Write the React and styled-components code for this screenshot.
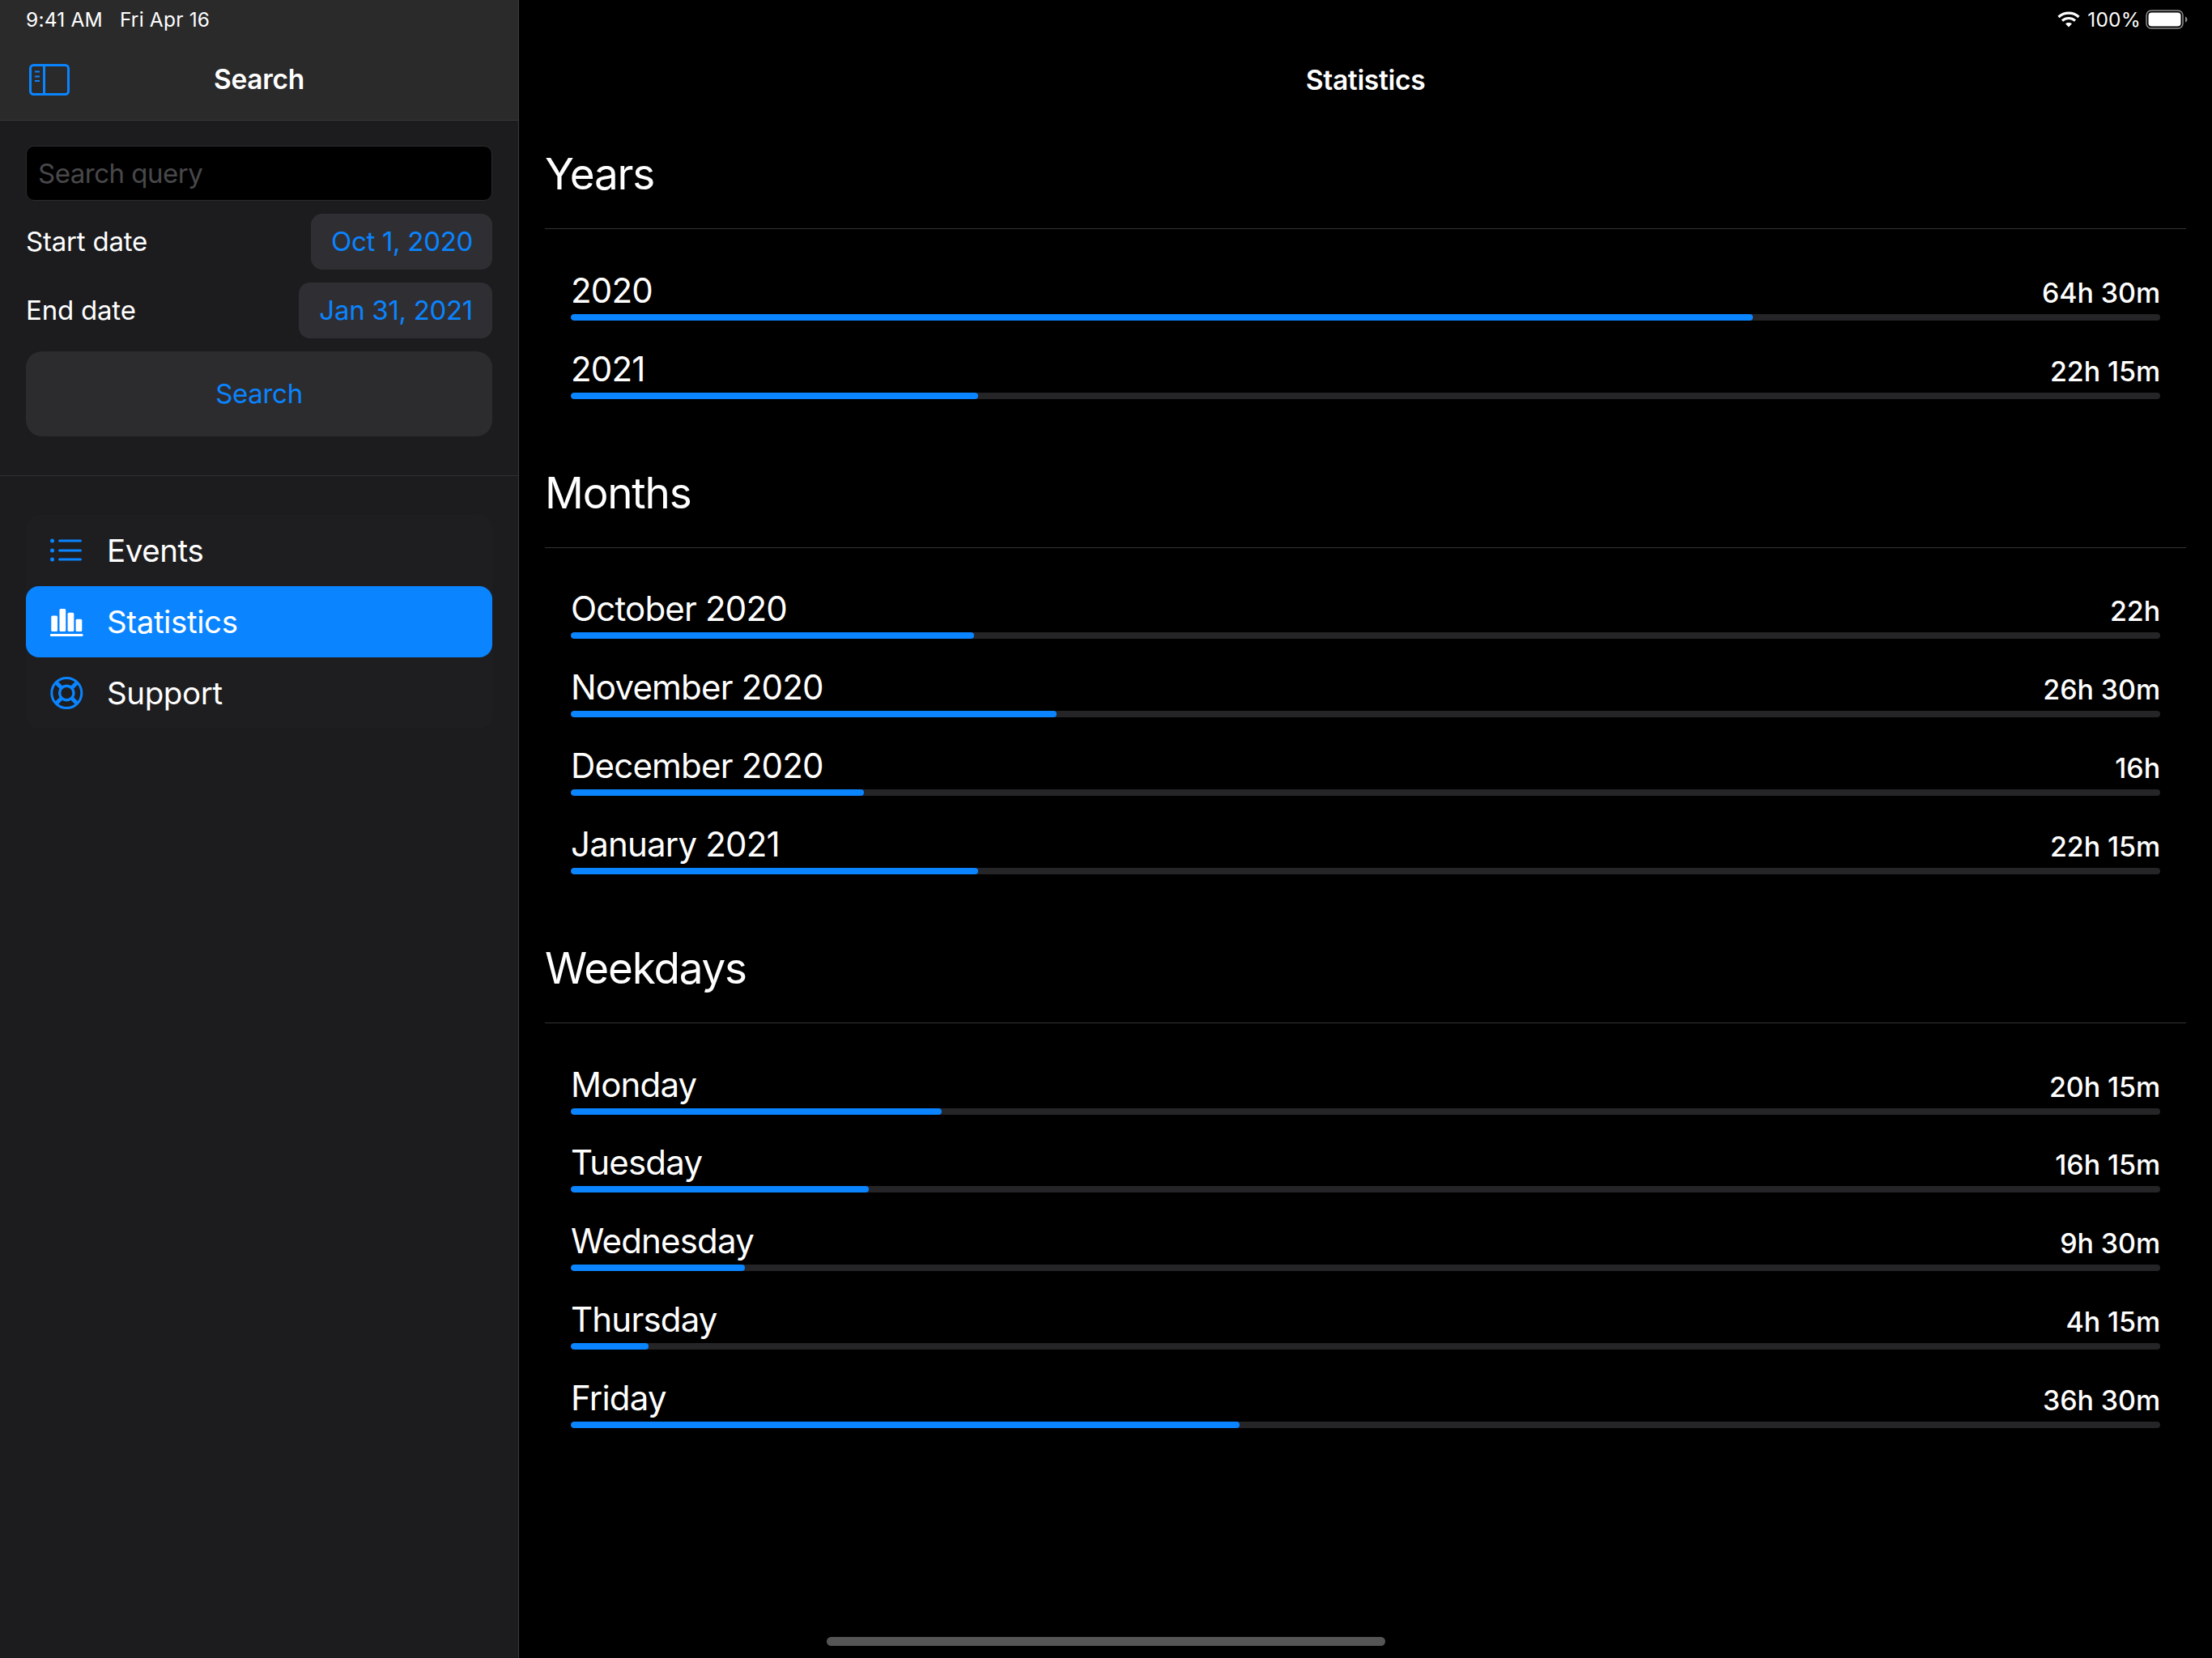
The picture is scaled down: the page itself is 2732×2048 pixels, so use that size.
import React from "react";
import styled, { createGlobalStyle } from "styled-components";

const Global = createGlobalStyle`
  html, body { margin: 0; padding: 0; background: #000; }
  * { box-sizing: border-box; }
  body { font-family: "Inter", "Liberation Sans", sans-serif; color: #fff; -webkit-font-smoothing: antialiased; }
`;

const Page = styled.div`
  position: relative;
  display: flex;
  width: 2732px;
  height: 2048px;
  overflow: hidden;
  background: #000;
`;

const Sidebar = styled.aside`
  width: 641px;
  flex: none;
  background: #1c1c1e;
  border-right: 1px solid #3a3a3c;
  display: flex;
  flex-direction: column;
`;

const Main = styled.main`
  flex: 1;
  min-width: 0;
  display: flex;
  flex-direction: column;
`;

const TopBar = styled.header`
  height: 149px;
  flex: none;
  display: flex;
  flex-direction: column;
  background: ${(p) => (p.$tinted ? "#2a2a2b" : "transparent")};
  border-bottom: ${(p) => (p.$tinted ? "1px solid #3a3a3c" : "0")};
`;

const StatusRow = styled.div`
  height: 48px;
  flex: none;
  padding: ${(p) => (p.$end ? "0 30px 0 0" : "0 32px")};
  display: flex;
  align-items: center;
  justify-content: ${(p) => (p.$end ? "flex-end" : "flex-start")};
  gap: ${(p) => (p.$end ? "6px" : "21px")};
  font-size: 24.500px;
  letter-spacing: 0.2px;
  color: #fff;
`;

const NavRow = styled.div`
  position: relative;
  flex: 1;
  display: flex;
  align-items: center;
  justify-content: center;
`;

const NavTitle = styled.h1`
  margin: 0;
  font-size: 33.500px;
  font-weight: 600;
  letter-spacing: -0.3px;
`;

const ToggleButton = styled.span`
  position: absolute;
  left: 36px;
  top: 31px;
  line-height: 0;
`;

const Form = styled.div`
  padding: 31px 32px 48px;
  display: flex;
  flex-direction: column;
  border-bottom: 1px solid #2f2f31;
`;

const SearchInput = styled.div`
  height: 68px;
  background: #000;
  border: 1px solid #2c2c2e;
  border-radius: 10px;
  padding: 0 14px;
  display: flex;
  align-items: center;
  font-size: 33px;
  color: #48484a;
  letter-spacing: -0.5px;
`;

const DateRow = styled.div`
  margin-top: 16px;
  display: flex;
  justify-content: space-between;
  align-items: center;
`;

const DateLabel = styled.span`
  font-size: 33px;
  letter-spacing: -0.2px;
  padding-bottom: 2px;
`;

const DateChip = styled.span`
  height: 69px;
  padding: 0 24px 2px 25px;
  border-radius: 14px;
  background: #2f2f33;
  color: #0a84ff;
  display: flex;
  align-items: center;
  font-size: 33px;
  letter-spacing: -0.3px;
`;

const SearchButton = styled.div`
  margin-top: 16px;
  height: 105px;
  padding-bottom: 2px;
  border-radius: 20px;
  background: #2c2c2e;
  color: #0a84ff;
  display: flex;
  align-items: center;
  justify-content: center;
  font-size: 33px;
  letter-spacing: -0.3px;
`;

const Menu = styled.nav`
  margin: 48px 32px 0;
  display: flex;
  flex-direction: column;
  background: #1e1e20;
  border-radius: 16px;
`;

const MenuItem = styled.div`
  height: 88px;
  padding-left: 30px;
  display: flex;
  align-items: center;
  gap: 28px;
  border-radius: 16px;
  font-size: 38.500px;
  letter-spacing: -0.4px;
  background: ${(p) => (p.$active ? "#0a84ff" : "transparent")};
  color: #fff;
`;

const IconBox = styled.span`
  width: 42px;
  height: 42px;
  flex: none;
  line-height: 0;
  color: ${(p) => (p.$active ? "#fff" : "#0a84ff")};
`;

const Content = styled.div`
  padding: 0 32px;
`;

const Section = styled.section`
  margin-bottom: 50px;
`;

const SectionTitle = styled.h2`
  margin: 0;
  padding: 32px 0 33px;
  line-height: 68px;
  font-size: 53px;
  font-weight: 400;
  letter-spacing: -1.2px;
  border-bottom: 1px solid #333335;
`;

const Rows = styled.div`
  padding: 16px 32px 0;
`;

const Row = styled.div`
  height: 96.8px;
  display: flex;
  flex-direction: column;
  justify-content: flex-end;
`;

const RowText = styled.div`
  display: flex;
  justify-content: space-between;
  align-items: baseline;
  margin-bottom: 2px;
`;

const RowLabel = styled.span`
  font-size: 42px;
  line-height: 54px;
  letter-spacing: -0.8px;
`;

const RowValue = styled.span`
  font-size: 34px;
  font-weight: 500;
  letter-spacing: -0.1px;
`;

const Track = styled.div`
  height: 8px;
  border-radius: 4px;
  background: #252527;
  overflow: hidden;
`;

const Fill = styled.div`
  height: 100%;
  border-radius: 4px;
  background: #0a84ff;
`;

const HomeIndicator = styled.div`
  position: absolute;
  left: 1021px;
  top: 2022px;
  width: 690px;
  height: 11px;
  border-radius: 5.500px;
  background: #555;
`;

const SidebarIcon = () => (
  <svg width="50" height="39" viewBox="0 0 50 39" fill="none" stroke="#0a84ff">
    <rect x="1.500" y="1.500" width="47" height="36" rx="4" strokeWidth="3" />
    <path d="M18.500 1.500v36" strokeWidth="3" />
    <path d="M7 9.500h6M7 15.500h6M7 21h6" strokeWidth="2" />
  </svg>
);

const ListIcon = () => (
  <svg width="42" height="42" viewBox="0 0 42 42" fill="currentColor">
    <circle cx="2.500" cy="9" r="2.500" />
    <circle cx="2.500" cy="21" r="2.500" />
    <circle cx="2.500" cy="32" r="2.500" />
    <rect x="10" y="7.500" width="29" height="3" rx="1.500" />
    <rect x="10" y="19.500" width="29" height="3" rx="1.500" />
    <rect x="10" y="30.500" width="29" height="3" rx="1.500" />
  </svg>
);

const ChartIcon = () => (
  <svg width="42" height="42" viewBox="0 0 42 42" fill="currentColor">
    <rect x="1.300" y="13.600" width="7.700" height="19.400" rx="1.500" />
    <rect x="11.500" y="5" width="7.700" height="28" rx="1.500" />
    <rect x="21.600" y="9.700" width="7.700" height="23.300" rx="1.500" />
    <rect x="31.600" y="17.700" width="7.700" height="15.300" rx="1.500" />
    <rect x="0" y="36" width="40.500" height="3" rx="1" />
  </svg>
);

const BuoyIcon = () => (
  <svg width="42" height="42" viewBox="0 0 42 42" fill="none" stroke="currentColor">
    <circle cx="20.300" cy="21" r="18.500" strokeWidth="3" />
    <circle cx="20.300" cy="21" r="8.700" strokeWidth="3.400" />
    <path
      d="M13.900 14.600L7.300 8M26.700 14.600L33.300 8M13.900 27.400L7.300 34M26.700 27.400L33.300 34"
      strokeWidth="5"
    />
  </svg>
);

const WifiIcon = () => (
  <svg width="31" height="22" viewBox="0 0 31 22" fill="none" stroke="#fff" strokeWidth="3.200">
    <path d="M1.500 8C8.500 1.500 19.500 1.500 26.500 8" />
    <path d="M6 12.500c4.500-4 11.500-4 16 0" />
    <path d="M14 20.500l-4-4.200c2.300-1.800 5.700-1.800 8 0z" fill="#fff" stroke="none" />
  </svg>
);

const BatteryIcon = () => (
  <svg width="52" height="24" viewBox="0 0 52 24">
    <rect x="1" y="1" width="45" height="22" rx="6" fill="none" stroke="#8e8e90" strokeWidth="1.500" />
    <rect x="3.500" y="3.500" width="40" height="17" rx="4" fill="#fff" />
    <path d="M49 8.500c1.500.5 2.500 2 2.500 3.500s-1 3-2.500 3.500z" fill="#8e8e90" />
  </svg>
);

const SECTIONS = [
  {
    title: "Years",
    rows: [
      ["2020", "64h 30m", 64.5],
      ["2021", "22h 15m", 22.25],
    ],
  },
  {
    title: "Months",
    rows: [
      ["October 2020", "22h", 22],
      ["November 2020", "26h 30m", 26.5],
      ["December 2020", "16h", 16],
      ["January 2021", "22h 15m", 22.25],
    ],
  },
  {
    title: "Weekdays",
    rows: [
      ["Monday", "20h 15m", 20.25],
      ["Tuesday", "16h 15m", 16.25],
      ["Wednesday", "9h 30m", 9.5],
      ["Thursday", "4h 15m", 4.25],
      ["Friday", "36h 30m", 36.5],
    ],
  },
];

const TOTAL = 86.75;

export default function App() {
  return (
    <Page>
      <Global />
      <Sidebar>
        <TopBar $tinted>
          <StatusRow>
            <span>9:41 AM</span>
            <span>Fri Apr 16</span>
          </StatusRow>
          <NavRow>
            <ToggleButton>
              <SidebarIcon />
            </ToggleButton>
            <NavTitle>Search</NavTitle>
          </NavRow>
        </TopBar>
        <Form>
          <SearchInput>Search query</SearchInput>
          <DateRow>
            <DateLabel>Start date</DateLabel>
            <DateChip>Oct 1, 2020</DateChip>
          </DateRow>
          <DateRow>
            <DateLabel>End date</DateLabel>
            <DateChip>Jan 31, 2021</DateChip>
          </DateRow>
          <SearchButton>Search</SearchButton>
        </Form>
        <Menu>
          <MenuItem>
            <IconBox><ListIcon /></IconBox>
            Events
          </MenuItem>
          <MenuItem $active>
            <IconBox $active><ChartIcon /></IconBox>
            Statistics
          </MenuItem>
          <MenuItem>
            <IconBox><BuoyIcon /></IconBox>
            Support
          </MenuItem>
        </Menu>
      </Sidebar>
      <Main>
        <TopBar>
          <StatusRow $end>
            <WifiIcon />
            <span>100%</span>
            <BatteryIcon />
          </StatusRow>
          <NavRow>
            <NavTitle>Statistics</NavTitle>
          </NavRow>
        </TopBar>
        <Content>
          {SECTIONS.map((s) => (
            <Section key={s.title}>
              <SectionTitle>{s.title}</SectionTitle>
              <Rows>
                {s.rows.map(([label, value, hours]) => (
                  <Row key={label}>
                    <RowText>
                      <RowLabel>{label}</RowLabel>
                      <RowValue>{value}</RowValue>
                    </RowText>
                    <Track>
                      <Fill style={{ width: `${(hours / TOTAL) * 100}%` }} />
                    </Track>
                  </Row>
                ))}
              </Rows>
            </Section>
          ))}
        </Content>
      </Main>
      <HomeIndicator />
    </Page>
  );
}
